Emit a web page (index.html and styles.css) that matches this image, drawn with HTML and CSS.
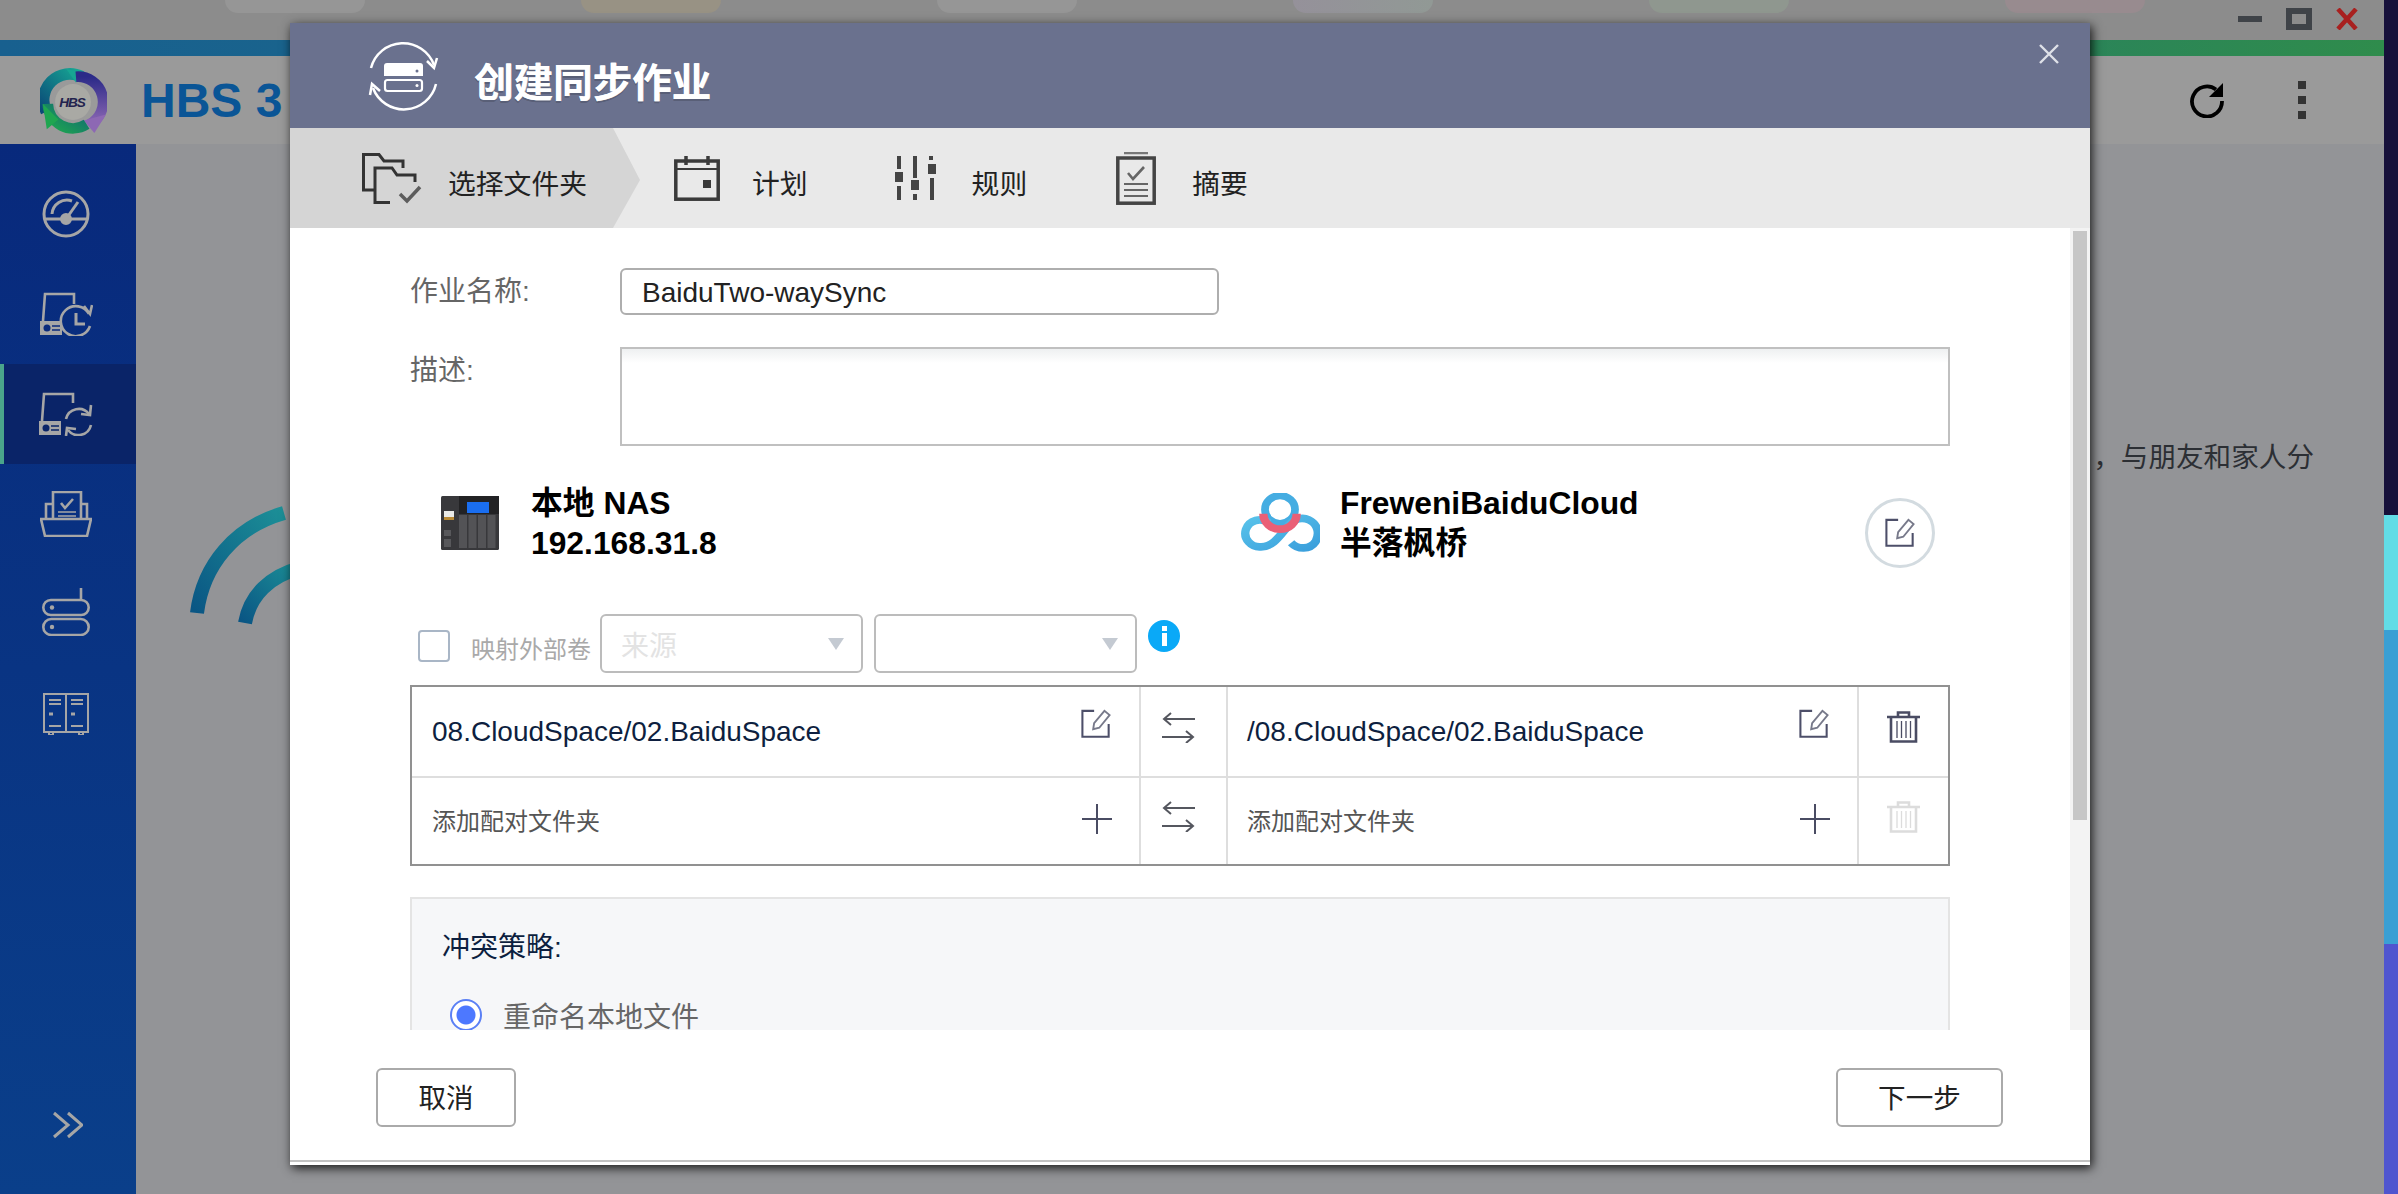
FILE: index.html
```html
<!DOCTYPE html>
<html lang="zh-CN">
<head>
<meta charset="utf-8">
<title>HBS 3</title>
<link rel="stylesheet" href="styles.css">
</head>
<body>
<svg class="defs" width="0" height="0" aria-hidden="true">
  <symbol id="i-edit" viewBox="0 0 32 32">
    <path d="M14 2H1.5V29.5H29.5V16" fill="none" stroke="#4d4f69" stroke-width="2.2"/>
    <path d="M13 21.5L14 15L25 2L30.5 6.500L19.500 20Z" fill="none" stroke="#77798a" stroke-width="2"/>
  </symbol>
  <symbol id="i-plus" viewBox="0 0 30 30">
    <path d="M15 0V30M0 15H30" fill="none" stroke="#4a4c63" stroke-width="2"/>
  </symbol>
  <symbol id="i-swap" viewBox="0 0 33 31">
    <path d="M33 7H2M9 1L2 7L9 13M0 25H31M24 19L31 25L24 31" fill="none" stroke="#55575f" stroke-width="2"/>
  </symbol>
  <symbol id="i-trash" viewBox="0 0 35 32">
    <path d="M1 6H34M12 5V1.500H23V5" fill="none" stroke="currentColor" stroke-width="2.600"/>
    <path d="M5 7V30.500H30V7" fill="none" stroke="currentColor" stroke-width="2.600"/>
    <path d="M11 10V27M15.500 10V27M20 10V27M24.500 10V27" fill="none" stroke="currentColor" stroke-width="1.300"/>
  </symbol>
  <symbol id="i-caret" viewBox="0 0 16 12">
    <path d="M0 0H16L8 12Z" fill="#c4cad2"/>
  </symbol>
</svg>

<div class="desktop">
  <div class="appwin">
    <div class="topstrip">
      <div class="dock">
        <span class="dock-item tone-a"></span>
        <span class="dock-item tone-b"></span>
        <span class="dock-item tone-a"></span>
        <span class="dock-item tone-c"></span>
        <span class="dock-item tone-d"></span>
        <span class="dock-item tone-e"></span>
      </div>
      <div class="winctl">
        <span class="win-min"></span>
        <span class="win-max"></span>
        <svg class="win-close" viewBox="0 0 22 22"><path d="M2 1L20 21M20 1L2 21" fill="none" stroke="#a8201f" stroke-width="4.500"/></svg>
      </div>
    </div>
    <div class="bar"></div>
    <header class="apphead">
      <svg class="hbs-logo" viewBox="-1 -1 69 69">
        <defs>
          <linearGradient id="g-teal" x1="0" y1="1" x2="1" y2="0"><stop offset="0" stop-color="#0b4a78"/><stop offset="1" stop-color="#17a593"/></linearGradient>
          <linearGradient id="g-purple" x1="0" y1="0" x2="0" y2="1"><stop offset="0" stop-color="#2b2a88"/><stop offset="1" stop-color="#8d68b4"/></linearGradient>
          <linearGradient id="g-green" x1="1" y1="0" x2="0" y2="1"><stop offset="0" stop-color="#0d5f78"/><stop offset="1" stop-color="#1fa650"/></linearGradient>
        </defs>
        <path d="M5.500 44A27 27 0 0 1 42 8" fill="none" stroke="url(#g-teal)" stroke-width="12"/>
        <path d="M26 0L46 4L36 14Z" fill="#17a593"/>
        <path d="M36 8A26 26 0 0 1 50 57" fill="none" stroke="url(#g-purple)" stroke-width="11"/>
        <path d="M67 47L55 66L44 53Z" fill="#8d68b4"/>
        <path d="M7 36A26 26 0 0 0 47 57" fill="none" stroke="url(#g-green)" stroke-width="11"/>
        <path d="M2 36L6 62L18 52Z" fill="#1fa650"/>
        <circle cx="33" cy="34" r="18.500" fill="#a9a9a4"/>
        <text class="hbs-mark" x="32" y="39" text-anchor="middle">HBS</text>
      </svg>
      <div class="appname">HBS 3</div>
      <div class="headtools">
        <svg class="refresh" viewBox="0 0 36 36">
          <path d="M27 7.500A15 15 0 1 0 33 19" fill="none" stroke="#000" stroke-width="3.800"/>
          <path d="M34 1V15H20Z" fill="#000"/>
        </svg>
        <span class="kebab"><i></i><i></i><i></i></span>
      </div>
    </header>
    <div class="main">
      <nav class="sidebar">
        <a class="nav-item"><svg class="nav-gauge" viewBox="0 0 48 48" fill="none" stroke="#a6a6a6" stroke-width="3"><circle cx="24" cy="24" r="22"/><path d="M3 29H45" /><path d="M24 29L36 12"/><circle cx="24" cy="29" r="4.500" fill="#a6a6a6"/><path d="M10 24A15 15 0 0 1 30 11"/></svg></a>
        <a class="nav-item"><svg class="nav-drive" viewBox="0 0 52 44" fill="none" stroke="#a6a6a6" stroke-width="2.600"><path d="M3 29L5 2H34V12"/><path d="M0 29H22V43H0Z" fill="#a6a6a6" stroke="none"/><circle cx="7" cy="36" r="3.500" fill="#0a2a7c" stroke="none"/><path d="M12 34H20M12 38H20" stroke="#0a2a7c" stroke-width="1.600"/><path d="M49 22A15 15 0 1 0 50 34"/><path d="M36 21V32H45" stroke-width="3"/><path d="M44 14L50 22L52 13" /></svg></a>
        <a class="nav-item nav-active"><svg class="nav-drive" viewBox="0 0 54 44" fill="none" stroke="#a6a6a6" stroke-width="2.600"><path d="M3 29L5 2H34V11"/><path d="M0 29H22V43H0Z" fill="#a6a6a6" stroke="none"/><circle cx="7" cy="36" r="3.500" fill="#0a2468" stroke="none"/><path d="M12 34H20M12 38H20" stroke="#0a2468" stroke-width="1.600"/><path d="M27 27A13 13 0 0 1 50 22"/><path d="M52 13L51 23L42 22"/><path d="M52 33A13 13 0 0 1 29 38"/><path d="M27 44L28 36L37 37"/></svg></a>
        <a class="nav-item"><svg class="nav-tray" viewBox="0 0 52 46" fill="none" stroke="#a6a6a6" stroke-width="2.600"><path d="M1 28H51L47 45H5Z"/><path d="M13 28V1H41V28"/><path d="M13 13H6V28M41 13H47V28"/><path d="M21 12L25 17L33 8"/><path d="M18 21H36M18 25H36" stroke-width="1.600"/></svg></a>
        <a class="nav-item"><svg class="nav-router" viewBox="0 0 48 48" fill="none" stroke="#a6a6a6" stroke-width="2.600"><rect x="1.300" y="12" width="45.400" height="15" rx="7.500"/><rect x="1.300" y="31" width="45.400" height="16" rx="8"/><path d="M39 0V12"/><circle cx="10" cy="19.500" r="2.200" fill="#a6a6a6" stroke="none"/><circle cx="10" cy="39" r="2.200" fill="#a6a6a6" stroke="none"/></svg></a>
        <a class="nav-item"><svg class="nav-cabinet" viewBox="0 0 46 42" fill="none" stroke="#a6a6a6" stroke-width="2"><rect x="1" y="1" width="44" height="38"/><path d="M23 1V39"/><path d="M6 7H18M6 11H18M28 7H40M28 11H40M6 33H18M28 33H40"/><path d="M6 21H10M28 21H32" stroke-width="3"/><path d="M6 40V42H10V40M36 40V42H40V40" /></svg></a>
        <div class="nav-spacer"></div>
        <svg class="nav-more" viewBox="0 0 30 28" fill="none" stroke="#a6a6a6" stroke-width="3"><path d="M1 2L15 14L1 26M15 2L29 14L15 26"/></svg>
      </nav>
      <section class="content">
        <svg class="arcs" viewBox="0 0 110 125">
          <defs>
            <linearGradient id="g-arc" x1="0" y1="1" x2="1" y2="0"><stop offset="0" stop-color="#0a5684"/><stop offset="1" stop-color="#1c8f97"/></linearGradient>
          </defs>
          <path d="M7 113C13 65 45 27 94 13" fill="none" stroke="url(#g-arc)" stroke-width="14"/>
          <path d="M55 123C60 95 80 76 110 68" fill="none" stroke="url(#g-arc)" stroke-width="14"/>
        </svg>
        <p class="promo">，与朋友和家人分</p>
      </section>
    </div>
  </div>
  <div class="wall">
    <span class="wall-dark"></span>
    <span class="wall-cyan"></span>
    <span class="wall-blue"></span>
    <span class="wall-indigo"></span>
  </div>

  <div class="modal">
    <div class="modal-head">
      <svg class="modal-icon" viewBox="0 0 71 70" fill="none" stroke="#fff" stroke-width="2.500">
        <path d="M3 27A33 33 0 0 1 66 24"/>
        <path d="M59 20L66 27L69 17"/>
        <path d="M68 43A33 33 0 0 1 5 47"/>
        <path d="M12 50L4 43L2 54"/>
        <path d="M16 35V25A3 3 0 0 1 19 22H52A3 3 0 0 1 55 25V35Z" fill="#fff" stroke="none"/>
        <rect x="17" y="39" width="37" height="11" rx="2.500" stroke-width="2.200"/>
        <circle cx="49" cy="30" r="1.500" fill="#6a718e" stroke="none"/>
        <circle cx="49" cy="44.500" r="1.500" fill="#fff" stroke="none"/>
      </svg>
      <h1 class="modal-title">创建同步作业</h1>
      <svg class="modal-close" viewBox="0 0 20 20"><path d="M1 1L19 19M19 1L1 19" fill="none" stroke="#dfe1e8" stroke-width="2.400"/></svg>
    </div>

    <div class="tabs">
      <div class="tab tab-active">
        <svg class="tab-icon-folder" viewBox="0 0 60 51" fill="none" stroke="#333" stroke-width="3"><path d="M12 37H1.500V1.500H17L22 8H41V15"/><path d="M28 49.500H13V15H30L35 22H53V29"/><path d="M38 41L45 48L58 34" stroke="#5d5d5d" stroke-width="3.500"/></svg>
        <span class="tab-text">选择文件夹</span>
      </div>
      <div class="tab tab-plan">
        <svg class="tab-icon-cal" viewBox="0 0 46 45" fill="none" stroke="#3a3a3a" stroke-width="3.500"><rect x="1.800" y="5" width="42.400" height="38.200"/><path d="M12 0V9M34 0V9" stroke-width="3.500"/><path d="M2 13H44" stroke-width="2"/><rect x="29" y="24" width="8" height="8" fill="#3a3a3a" stroke="none"/></svg>
        <span class="tab-text">计划</span>
      </div>
      <div class="tab">
        <svg class="tab-icon-sliders" viewBox="0 0 41 44" fill="#444"><rect x="2" y="0" width="4" height="13"/><rect x="0" y="16" width="8" height="10"/><rect x="2" y="30" width="4" height="14"/><rect x="18" y="0" width="4" height="22"/><rect x="16" y="24" width="8" height="10"/><rect x="18" y="38" width="4" height="6"/><rect x="34" y="0" width="4" height="4"/><rect x="33" y="8" width="8" height="10"/><rect x="35" y="22" width="4" height="22"/></svg>
        <span class="tab-text">规则</span>
      </div>
      <div class="tab">
        <svg class="tab-icon-clip" viewBox="0 0 40 53" fill="none" stroke="#444" stroke-width="3.500"><rect x="1.800" y="6" width="36.400" height="45.200"/><path d="M8 1H32" stroke="#777" stroke-width="2.500"/><path d="M12 21L17 27L28 15" stroke="#666" stroke-width="2.600"/><path d="M8 32H32M8 38H32M8 44H32" stroke="#666" stroke-width="2.200"/></svg>
        <span class="tab-text">摘要</span>
      </div>
    </div>

    <div class="modal-body">
      <div class="form">
        <div class="field field-name">
          <label class="field-label">作业名称:</label>
          <div class="text-input">BaiduTwo-waySync</div>
        </div>
        <div class="field field-desc">
          <label class="field-label">描述:</label>
          <div class="text-area"></div>
        </div>

        <div class="endpoints">
          <div class="endpoint endpoint-local">
            <svg class="nas-img" viewBox="0 0 58 55">
              <rect x="0" y="0" width="58" height="54" rx="1.500" fill="#38383b"/>
              <rect x="18" y="0" width="40" height="18" fill="#222224"/>
              <rect x="26" y="6" width="22" height="11" fill="#1a6ef0"/>
              <rect x="3" y="15" width="10" height="6" fill="#e9e9e6"/>
              <rect x="3" y="21" width="10" height="3" fill="#b98a36"/>
              <rect x="3" y="34" width="7" height="6" fill="#58585b"/>
              <rect x="3" y="43" width="7" height="8" fill="#58585b"/>
              <rect x="18" y="19" width="8" height="33" fill="#535356"/>
              <rect x="27.500" y="19" width="8" height="33" fill="#535356"/>
              <rect x="37" y="19" width="8" height="33" fill="#535356"/>
              <rect x="46.500" y="19" width="8" height="33" fill="#535356"/>
            </svg>
            <div class="endpoint-text">本地 NAS<br>192.168.31.8</div>
          </div>
          <div class="endpoint endpoint-cloud">
            <svg class="baidu-img" viewBox="4 1 72 58" preserveAspectRatio="none" fill="none" stroke-width="7">
              <defs>
                <linearGradient id="g-baidu" x1="0" y1="0" x2="1" y2="1"><stop offset="0" stop-color="#58c2ea"/><stop offset="1" stop-color="#3a9fdc"/></linearGradient>
              </defs>
              <circle cx="40" cy="17" r="13.500" stroke="#45ade2"/>
              <path d="M30 30A13 13 0 1 0 23 53C34 53 40 42 48 32C53 26 60 24 66 27C74 31 76 40 72 48C67 56 56 56 50 49" stroke="url(#g-baidu)" stroke-width="7.500"/>
              <path d="M25 21A15 15 0 0 0 55 21" stroke="#ea5f76" stroke-width="7.500"/>
            </svg>
            <div class="endpoint-text">FreweniBaiduCloud<br>半落枫桥</div>
          </div>
          <div class="edit-circle"><svg class="edit-circle-icon"><use href="#i-edit"/></svg></div>
        </div>

        <div class="mapping">
          <span class="checkbox"></span>
          <span class="mapping-label">映射外部卷</span>
          <div class="select"><span>来源</span><svg class="caret"><use href="#i-caret"/></svg></div>
          <div class="select select-empty"><span></span><svg class="caret"><use href="#i-caret"/></svg></div>
          <svg class="info" viewBox="0 0 32 32"><circle cx="16" cy="16" r="16" fill="#0aa9f7"/><rect x="14" y="6" width="5" height="5" fill="#fff"/><rect x="14" y="13" width="5" height="13" fill="#fff"/></svg>
        </div>

        <div class="pairs">
          <div class="cell cell-path"><span class="path-text">08.CloudSpace/02.BaiduSpace</span><svg class="icon-edit"><use href="#i-edit"/></svg></div>
          <div class="cell cell-swap"><svg class="icon-swap"><use href="#i-swap"/></svg></div>
          <div class="cell cell-path cell-path-r"><span class="path-text">/08.CloudSpace/02.BaiduSpace</span><svg class="icon-edit"><use href="#i-edit"/></svg></div>
          <div class="cell cell-del"><svg class="icon-trash"><use href="#i-trash"/></svg></div>
          <div class="cell cell-path cell-last"><span class="add-text">添加配对文件夹</span><svg class="icon-plus"><use href="#i-plus"/></svg></div>
          <div class="cell cell-swap cell-last"><svg class="icon-swap"><use href="#i-swap"/></svg></div>
          <div class="cell cell-path cell-path-r cell-last"><span class="add-text">添加配对文件夹</span><svg class="icon-plus"><use href="#i-plus"/></svg></div>
          <div class="cell cell-del cell-last"><svg class="icon-trash icon-off"><use href="#i-trash"/></svg></div>
        </div>

        <div class="policy">
          <div class="policy-title">冲突策略:</div>
          <div class="radio-row"><span class="radio"></span><span class="radio-text">重命名本地文件</span></div>
        </div>
      </div>
      <div class="scrollbar"><div class="scroll-thumb"></div></div>
    </div>

    <div class="modal-foot">
      <button class="btn btn-cancel">取消</button>
      <button class="btn btn-next">下一步</button>
    </div>
  </div>
</div>
</body>
</html>
```
FILE: styles.css
```css
* { box-sizing: border-box; }
html, body { margin: 0; padding: 0; }
body {
  font-family: "Liberation Sans", "Noto Sans CJK SC", sans-serif;
  background: #16103a;
  overflow: hidden;
}
.defs { display: block; height: 0; }

.desktop {
  position: relative;
  display: flex;
  width: 2398px;
  height: 1194px;
  overflow: hidden;
}
.appwin { width: 2384px; display: flex; flex-direction: column; }

/* top strip */
.topstrip {
  height: 40px;
  background: #8c8c8c;
  display: flex;
  justify-content: space-between;
  align-items: flex-start;
}
.dock { display: flex; gap: 216px; padding-left: 225px; }
.dock-item { width: 140px; height: 13px; border-radius: 0 0 34px 34px; }
.tone-a { background: #969696; }
.tone-b { background: #989284; }
.tone-c { background: linear-gradient(90deg, #95919a, #919995); }
.tone-d { background: #8f978f; }
.tone-e { background: #988b8f; }
.winctl { display: flex; align-items: center; height: 38px; padding-right: 26px; }
.win-min { width: 24px; height: 6px; background: #3f4348; margin-right: 24px; }
.win-max { width: 26px; height: 22px; border: 6px solid #3f4348; margin-right: 24px; }
.win-close { width: 22px; height: 22px; }

.bar { height: 16px; background: linear-gradient(90deg, #18608f 0%, #1c6a88 40%, #2f8c4c 100%); }

.apphead {
  height: 88px;
  background: #9a9a9a;
  display: flex;
  align-items: center;
  padding-left: 40px;
}
.hbs-logo { width: 67px; height: 67px; margin-top: 2px; }
.hbs-mark { font: italic bold 14px "Liberation Sans", sans-serif; fill: #23234d; letter-spacing: -1px; }
.appname { margin-left: 34px; font-size: 48px; font-weight: 700; color: #0a5596; white-space: nowrap; }
.headtools { margin-left: auto; display: flex; align-items: center; }
.refresh { width: 36px; height: 36px; }
.kebab { display: flex; flex-direction: column; gap: 7px; margin-left: 73px; margin-right: 78px; }
.kebab i { display: block; width: 8px; height: 8px; background: #333; }

.main { flex: 1; display: flex; min-height: 0; }
.sidebar {
  width: 136px;
  background: linear-gradient(180deg, #08297c 0%, #0a3f8a 100%);
  display: flex;
  flex-direction: column;
  align-items: stretch;
  padding-top: 20px;
  padding-bottom: 55px;
}
.nav-item { height: 100px; display: flex; align-items: center; justify-content: center; padding-right: 4px; }
.nav-active { background: #0a2468; border-left: 4px solid #4aa58b; padding-right: 8px; }
.nav-gauge { width: 48px; height: 48px; }
.nav-drive { width: 54px; height: 44px; }
.nav-tray { width: 52px; height: 46px; }
.nav-router { width: 48px; height: 48px; margin-bottom: 5px; }
.nav-cabinet { width: 46px; height: 42px; }
.nav-spacer { flex: 1; }
.nav-more { width: 30px; height: 28px; align-self: center; }

.content {
  flex: 1;
  background: #939497;
  display: flex;
  align-items: flex-start;
  justify-content: space-between;
}
.arcs { width: 110px; height: 125px; margin: 356px 0 0 54px; }
.promo {
  margin: 294px 70px 0 0;
  font-size: 27.6px;
  line-height: 40px;
  color: #2c2f34;
  white-space: nowrap;
}

.wall { width: 14px; display: flex; flex-direction: column; }
.wall-dark { height: 515px; background: #16103a; }
.wall-cyan { height: 115px; background: #62dce6; }
.wall-blue { height: 314px; background: #3a9fd4; }
.wall-indigo { flex: 1; background: #4f55cf; }

/* modal */
.modal {
  position: absolute;
  left: 290px;
  top: 23px;
  width: 1800px;
  height: 1142px;
  background: #fff;
  display: flex;
  flex-direction: column;
  box-shadow: 2px 3px 10px rgba(0, 0, 0, 0.85);
}
.modal-head {
  height: 105px;
  flex: none;
  background: #6a718e;
  display: flex;
  align-items: center;
  padding-left: 78px;
}
.modal-icon { width: 71px; height: 70px; }
.modal-title {
  margin: 7px 0 0 35px;
  font-size: 39.5px;
  font-weight: 700;
  color: #fff;
  text-shadow: 0 2px 0 rgba(0, 0, 0, 0.18), 0.6px 0 0 #fff;
}
.modal-close { width: 20px; height: 20px; margin-left: auto; margin-right: 31px; margin-top: -44px; }

.tabs {
  height: 100px;
  flex: none;
  background: #e9e9e9;
  display: flex;
  align-items: stretch;
  font-size: 27.8px;
  color: #222;
}
.tab { display: flex; align-items: center; margin-right: 87px; white-space: nowrap; }
.tab-text { margin-top: 7px; }
.tab-active {
  width: 350px;
  margin-right: 0;
  padding-left: 72px;
  gap: 26px;
  background: #d5d5d5;
  clip-path: polygon(0 0, 323px 0, 350px 52px, 323px 100%, 0 100%);
}
.tab-plan { margin-left: 34px; gap: 32px; }
.tab:nth-child(3) { gap: 36px; }
.tab:nth-child(4) { gap: 36px; margin-left: 2px; margin-right: 0; }
.tab-icon-folder { width: 60px; height: 51px; }
.tab-icon-cal { width: 46px; height: 45px; }
.tab-icon-sliders { width: 41px; height: 44px; }
.tab-icon-clip { width: 40px; height: 53px; }

.modal-body { flex: 1; min-height: 0; display: flex; }
.form { flex: 1; min-width: 0; overflow: hidden; padding: 40px 120px 0 120px; }
.scrollbar { width: 20px; background: #f3f3f3; padding: 3px 3px 0 3px; }
.scroll-thumb { width: 14px; height: 589px; background: #c6c6c6; }

.field { display: flex; align-items: flex-start; }
.field-name { height: 47px; align-items: center; }
.field-desc { margin-top: 32px; }
.field-label { width: 210px; font-size: 28px; color: #666; line-height: 47px; white-space: nowrap; }
.text-input {
  width: 599px;
  height: 47px;
  border: 2px solid #aeaeae;
  border-radius: 6px;
  padding-left: 20px;
  font-size: 28px;
  line-height: 45px;
  color: #222;
}
.text-area {
  width: 1330px;
  height: 99px;
  border: 2px solid #c0c0c0;
  background: linear-gradient(180deg, #eef0f1 0, #fff 14px);
}

.endpoints { height: 80px; margin-top: 37px; display: flex; align-items: flex-start; }
.endpoint { display: flex; align-items: center; height: 80px; }
.endpoint-local { width: 830px; padding-left: 31px; gap: 32px; }
.endpoint-cloud { gap: 20px; }
.endpoint-text { font-size: 31.8px; font-weight: 700; line-height: 40px; color: #000; white-space: nowrap; }
.nas-img { width: 58px; height: 55px; }
.baidu-img { width: 80px; height: 60px; }
.edit-circle {
  width: 70px;
  height: 70px;
  margin: 15px 15px 0 auto;
  border: 3px solid #d3dbe0;
  border-radius: 50%;
  display: flex;
  align-items: center;
  justify-content: center;
}
.edit-circle-icon { width: 30px; height: 30px; }

.mapping { height: 59px; margin-top: 51px; display: flex; align-items: center; }
.checkbox { width: 32px; height: 32px; margin-left: 8px; border: 2px solid #a9b6c6; border-radius: 4px; margin-top: 5px; }
.mapping-label { width: 150px; padding-left: 21px; font-size: 24px; color: #a9a9a9; white-space: nowrap; margin-top: 7px; }
.select {
  width: 263px;
  height: 59px;
  margin-right: 11px;
  border: 2px solid #bcbcbc;
  border-radius: 6px;
  padding: 0 17px 0 19px;
  display: flex;
  align-items: center;
  justify-content: space-between;
  font-size: 28px;
  color: #e3e3e3;
}
.caret { width: 16px; height: 12px; }
.info { width: 32px; height: 32px; margin-top: -15px; }

.pairs {
  height: 181px;
  margin-top: 12px;
  border: 2px solid #919191;
  display: grid;
  grid-template-columns: 729px 87px 631px 1fr;
  grid-template-rows: 91px 1fr;
}
.cell { border-bottom: 2px solid #dedede; border-right: 2px solid #dedede; display: flex; align-items: center; }
.cell-del { border-right: 0; justify-content: center; }
.cell-last { border-bottom: 0; }
.cell-swap { justify-content: center; padding-right: 10px; }
.cell-path { justify-content: space-between; padding: 0 27px 0 20px; }
.cell-path-r { padding-left: 19px; }
.path-text { font-size: 28px; color: #0e1f40; white-space: nowrap; margin-top: 1px; }
.add-text { font-size: 24px; color: #555; white-space: nowrap; margin-bottom: 3px; }
.icon-edit { width: 32px; height: 30px; margin-bottom: 16px; }
.icon-plus { width: 30px; height: 30px; margin-bottom: 4px; }
.icon-swap { width: 33px; height: 31px; margin-bottom: 9px; }
.icon-trash { width: 35px; height: 32px; color: #4a4c63; margin-bottom: 9px; }
.icon-off { color: #dcdcdc; margin-bottom: 8px; }

.policy {
  margin-top: 31px;
  height: 300px;
  background: #f6f7f9;
  border: 2px solid #e4e4e4;
  padding: 31px 30px 0;
}
.policy-title { font-size: 28px; line-height: 36px; color: #0d1f3f; }
.radio-row { margin-top: 31px; height: 36px; padding-left: 8px; display: flex; align-items: center; gap: 21px; }
.radio {
  width: 32px;
  height: 32px;
  border-radius: 50%;
  border: 2px solid #5b80f5;
  background: radial-gradient(circle, #4d78ff 0, #4d78ff 9px, #fff 10px);
}
.radio-text { font-size: 28px; color: #666; }

.modal-foot {
  height: 135px;
  flex: none;
  display: flex;
  justify-content: space-between;
  align-items: flex-start;
  padding: 38px 87px 0 86px;
  border-bottom: 3px solid #fff;
  box-shadow: inset 0 -2px 0 #c2c2c2;
}
.btn {
  height: 59px;
  background: #fff;
  border: 2px solid #aaa;
  border-radius: 6px;
  font-family: inherit;
  font-size: 27.6px;
  color: #222;
  padding: 0 0 3px;
}
.btn-cancel { width: 140px; }
.btn-next { width: 167px; }
```
